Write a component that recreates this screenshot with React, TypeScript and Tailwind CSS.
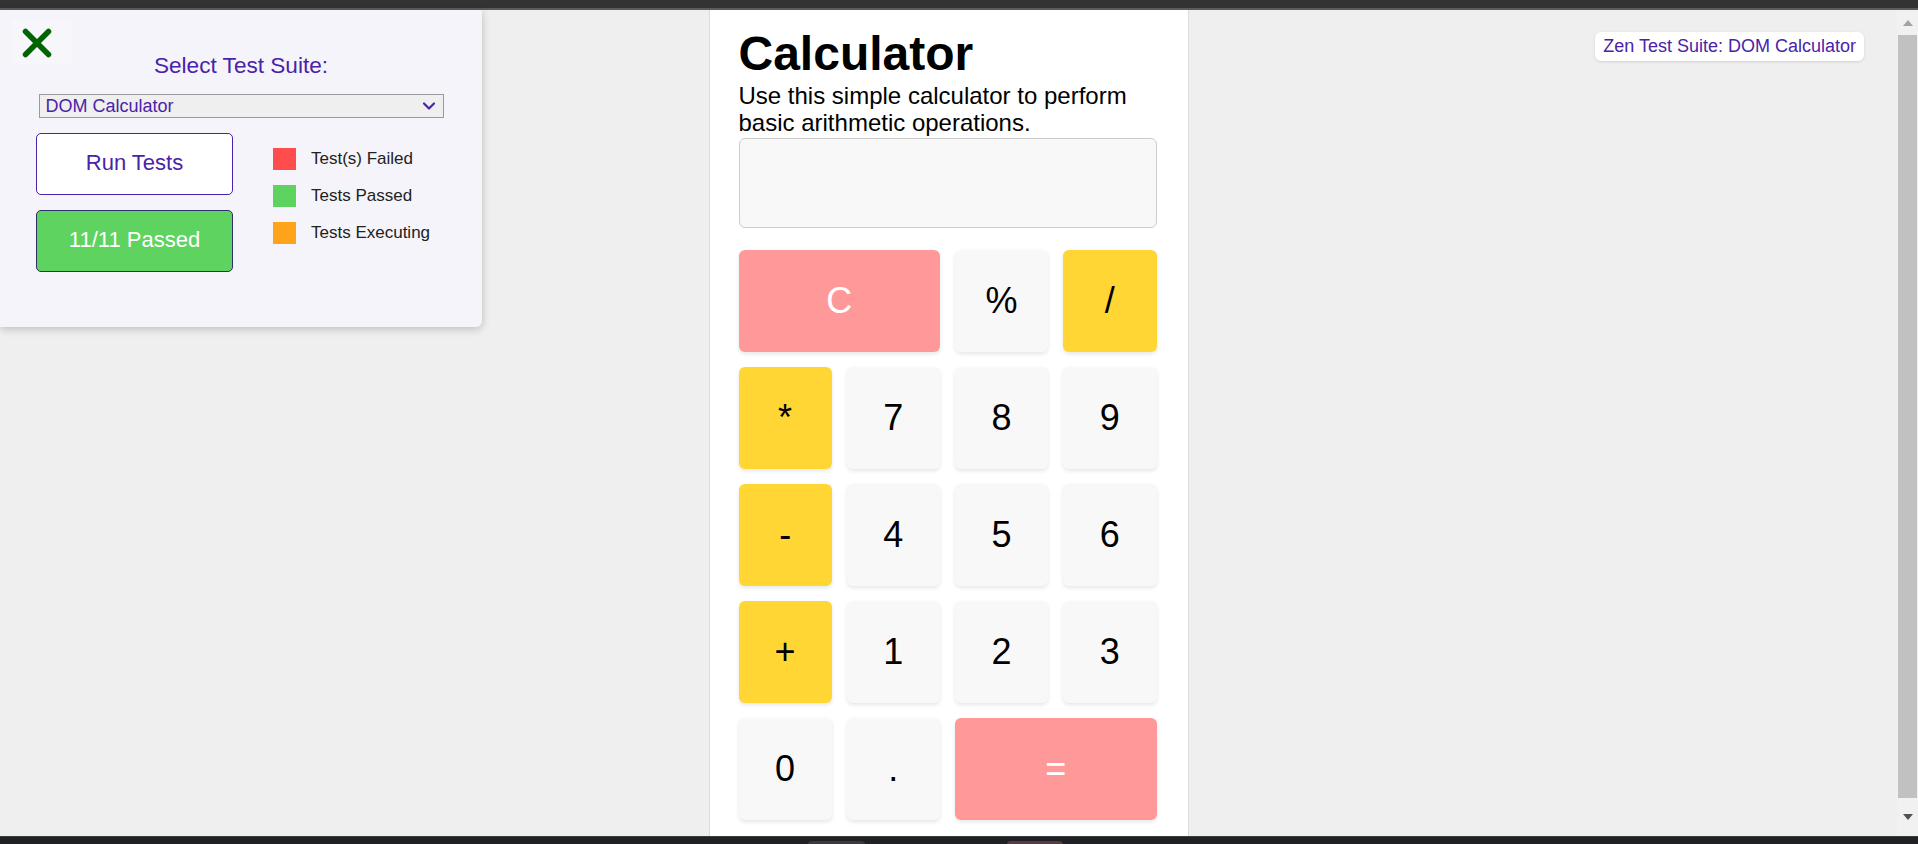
import React from "react";

const FONT = { fontFamily: '"Liberation Sans", Arial, Helvetica, sans-serif' };

type Key = { label: string; kind: "num" | "op" | "eq"; span?: boolean };

const keys: Key[] = [
  { label: "C", kind: "eq", span: true },
  { label: "%", kind: "num" },
  { label: "/", kind: "op" },
  { label: "*", kind: "op" },
  { label: "7", kind: "num" },
  { label: "8", kind: "num" },
  { label: "9", kind: "num" },
  { label: "-", kind: "op" },
  { label: "4", kind: "num" },
  { label: "5", kind: "num" },
  { label: "6", kind: "num" },
  { label: "+", kind: "op" },
  { label: "1", kind: "num" },
  { label: "2", kind: "num" },
  { label: "3", kind: "num" },
  { label: "0", kind: "num" },
  { label: ".", kind: "num" },
  { label: "=", kind: "eq", span: true },
];

function KeyButton({ k }: { k: Key }) {
  const color =
    k.kind === "eq"
      ? "bg-[#ff9999] text-white"
      : k.kind === "op"
      ? "bg-[#ffd633] text-black"
      : "bg-[#f8f8f8] text-black";
  return (
    <button
      className={`flex h-[102px] items-center justify-center rounded-[6px] text-[36px] shadow-[0_2px_4px_rgba(0,0,0,0.1)] ${color} ${
        k.span ? "col-span-2" : ""
      }`}
    >
      {k.label}
    </button>
  );
}

function Legend({ color, label }: { color: string; label: string }) {
  return (
    <div className="flex h-[22px] items-center gap-[15px]">
      <div className={`h-[22px] w-[23px] ${color}`} />
      <span className="text-[17px] text-[#222]">{label}</span>
    </div>
  );
}

export default function App() {
  return (
    <div className="flex h-[844px] w-[1918px] flex-col overflow-hidden bg-[#efefef]" style={FONT}>
      {/* top chrome */}
      <div className="h-[8px] bg-[#333333]" />
      <div className="h-[2px] bg-[#5c5c5c]" />

      <div className="relative flex min-h-0 flex-1">
        {/* main page */}
        <div className="relative flex flex-1 justify-center bg-[#efefef]">
          <div className="w-[480px] border-x border-[#dcdcdc] bg-white pl-[29px] pr-[31px]">
            <h1 className="mt-[16px] text-[48px] font-bold leading-[56px] text-black">Calculator</h1>
            <p className="text-[24px] leading-[27px] text-black">
              Use this simple calculator to perform basic arithmetic operations.
            </p>
            <div className="mt-[2px] h-[90px] rounded-[6px] border border-[#cccccc] bg-[#f8f8f8]" />
            <div className="mt-[22px] grid grid-cols-4 gap-[15px]">
              {keys.map((k, i) => (
                <KeyButton key={i} k={k} />
              ))}
            </div>
          </div>

          {/* badge */}
          <div className="absolute right-[33px] top-[22px] rounded-[6px] bg-white px-[8px] py-[4px] text-[18px] leading-[21px] text-[#4a23a8] shadow-[0_1px_3px_rgba(0,0,0,0.12)]">
            Zen Test Suite: DOM Calculator
          </div>

          {/* test panel overlay */}
          <div className="absolute left-0 top-0 flex h-[317px] w-[482px] flex-col items-center rounded-br-[6px] bg-[#f5f4fa] pt-[43px] shadow-[0_2px_8px_rgba(0,0,0,0.22)]">
            <button className="absolute left-[12px] top-[10px] flex h-[45px] w-[60px] items-center justify-start bg-[#f7f6fb] pl-[10px]">
              <svg width="30" height="30" viewBox="0 0 30 30">
                <path d="M3.5 3.5 L26.5 26.5 M26.5 3.5 L3.5 26.5" stroke="#006400" strokeWidth="5.5" strokeLinecap="round" />
              </svg>
            </button>
            <div className="text-[22.6px] leading-[26px] text-[#4a23a8]">Select Test Suite:</div>
            <div className="mt-[15px] flex h-[24px] w-[405px] items-center justify-between border border-[#9a9a9a] bg-[#efefef] pl-[6px] pr-[7px]">
              <span className="text-[18px] leading-[20px] text-[#4a23a8]">DOM Calculator</span>
              <svg width="14" height="10" viewBox="0 0 14 10">
                <path d="M2 2.5 L7 7.5 L12 2.5" fill="none" stroke="#4a23a8" strokeWidth="2.2" strokeLinecap="round" strokeLinejoin="round" />
              </svg>
            </div>
            <div className="mt-[15px] flex w-full gap-[40px] pl-[36px]">
              <div className="flex w-[197px] flex-col gap-[15px]">
                <button className="flex h-[62px] items-center justify-center rounded-[5px] border border-[#4a23a8] bg-white pb-[3px] text-[22px] text-[#4a23a8]">
                  Run Tests
                </button>
                <button className="flex h-[62px] items-center justify-center rounded-[5px] border border-[#2b2f6b] bg-[#5fd35f] pb-[3px] text-[22px] text-white">
                  11/11 Passed
                </button>
              </div>
              <div className="flex flex-col gap-[15px] pt-[15px]">
                <Legend color="bg-[#ff4d4d]" label="Test(s) Failed" />
                <Legend color="bg-[#5fd35f]" label="Tests Passed" />
                <Legend color="bg-[#ffa31a]" label="Tests Executing" />
              </div>
            </div>
          </div>
        </div>

        {/* scrollbar */}
        <div className="flex w-[21px] flex-col bg-[#f1f1f1]">
          <div className="flex h-[25px] items-center justify-center pl-[1px]">
            <svg width="10" height="6" viewBox="0 0 10 6">
              <path d="M5 0 L10 6 L0 6 Z" fill="#a3a3a3" />
            </svg>
          </div>
          <div className="ml-[1px] mr-[1px] h-[763px] bg-[#c1c1c1]" />
          <div className="flex flex-1 items-center justify-center pl-[1px]">
            <svg width="10" height="6" viewBox="0 0 10 6">
              <path d="M0 0 L10 0 L5 6 Z" fill="#505050" />
            </svg>
          </div>
        </div>
      </div>

      {/* bottom chrome */}
      <div className="relative h-[8px] border-t border-[#3c3c3c] bg-[#202124]">
        <div className="absolute left-[808px] top-[4px] h-[4px] w-[57px] rounded-t-[4px] bg-[#3b3b3f]" />
        <div className="absolute left-[1007px] top-[4px] h-[4px] w-[56px] rounded-t-[4px] bg-[#5a3b41]" />
      </div>
    </div>
  );
}
